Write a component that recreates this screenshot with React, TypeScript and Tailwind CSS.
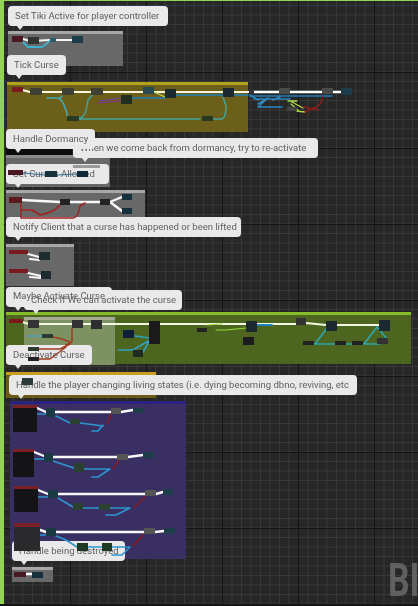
const FONT = "font-['Roboto',sans-serif]";

function Comment({ x, y, w, h, bg, head }: { x: number; y: number; w: number; h: number; bg: string; head: string }) {
  return (
    <div className={`absolute ${bg}`} style={{ left: x, top: y, width: w, height: h }}>
      <div className={`h-[3px] ${head}`} />
    </div>
  );
}

function Bubble({ x, y, w, text, ghost }: { x: number; y: number; w: number; text: string; ghost?: boolean }) {
  return (
    <div
      className={`absolute flex h-5 items-center whitespace-nowrap rounded-[4px] pl-[7px] text-[9.5px] text-[#606060] ${FONT} ${ghost ? "" : "bg-[#e9e9e9]"}`}
      style={{ left: x, top: y, width: w }}
    >
      {text}
      {!ghost && (
        <div className="absolute left-[9px] top-5 h-0 w-0 border-x-[3px] border-t-[4px] border-x-transparent border-t-[#e9e9e9]" />
      )}
    </div>
  );
}

type N = [number, number, number, number, string?];

// graph nodes: x, y, w, h, colour
const nodes: N[] = [
  [12, 36, 11, 6, "#4a1820"], [28, 37, 11, 7, "#30342e"], [50, 38, 6, 4, "#2b5a6a"], [72, 36, 11, 7, "#1d3d4a"],
  [12, 87, 11, 5, "#7a1a1e"], [30, 88, 12, 7, "#3f3f34"], [62, 88, 12, 7, "#3f3f34"], [91, 88, 12, 7, "#3f3f34"],
  [143, 87, 11, 7, "#2a4a52"], [165, 89, 11, 9, "#1a2a2e"], [121, 95, 11, 9, "#22301f"], [67, 116, 12, 5, "#2a3a20"],
  [202, 116, 11, 5, "#2a3a20"], [223, 88, 11, 9, "#1a2a2e"],
  [249, 89, 5, 4, "#333"], [279, 88, 11, 6, "#4a4a4a"], [322, 88, 11, 6, "#4a4a4a"], [341, 88, 11, 7, "#1d3d4a"],
  [287, 107, 10, 4, "#444"],
  [8, 170, 15, 5, "#4a1820"], [45, 171, 12, 6, "#16303c"], [77, 171, 11, 6, "#0e2a3a"],
  [73, 165, 27, 3, "#9a9a9a"],
  [9, 197, 13, 6, "#5a1a1e"], [60, 199, 10, 6, "#222"], [100, 199, 10, 6, "#222"], [122, 194, 10, 6, "#16303c"], [122, 208, 10, 6, "#16303c"],
  [9, 250, 19, 4, "#7a1a1e"], [39, 252, 11, 8, "#1c2c30"], [9, 269, 19, 4, "#7a1a1e"], [41, 271, 10, 8, "#1c2c30"],
  [9, 319, 14, 4, "#7a1a1a"], [28, 320, 11, 8, "#333"], [72, 320, 11, 8, "#333"], [91, 320, 11, 9, "#2e2e2e"],
  [42, 334, 11, 4, "#2a3a30"], [28, 347, 11, 4, "#2a3a30"], [28, 357, 11, 4, "#222"], [149, 321, 11, 23, "#1a1a1a"],
  [123, 330, 11, 8, "#0e2038"], [133, 350, 10, 7, "#1f2a20"], [197, 328, 10, 4, "#222"],
  [246, 321, 11, 11, "#1a2a30"], [243, 337, 11, 8, "#1c1c1c"], [296, 318, 10, 7, "#333"], [326, 321, 11, 10, "#1a2a30"],
  [379, 320, 11, 11, "#1a2a30"], [303, 341, 11, 4, "#222"], [335, 341, 11, 4, "#222"], [352, 341, 11, 4, "#222"], [377, 338, 11, 6, "#333"],
  [22, 378, 11, 7, "#2a3a3a"],
  // purple group
  [13, 405, 24, 3, "#7a2026"], [13, 408, 24, 24, "#141416"], [46, 408, 9, 9, "#1a3a44"], [70, 419, 10, 5, "#2a4030"], [111, 408, 10, 6, "#555"], [133, 408, 11, 5, "#1d3d4a"],
  [13, 449, 21, 3, "#7a2026"], [13, 452, 21, 25, "#141416"], [44, 453, 9, 9, "#1a3a44"], [74, 463, 10, 9, "#2a4030"], [117, 454, 11, 6, "#555"], [143, 452, 11, 6, "#1d3d4a"],
  [14, 486, 24, 3, "#7a2026"], [14, 489, 24, 23, "#141416"], [48, 490, 10, 8, "#1a3a44"], [73, 503, 10, 7, "#2a4030"], [99, 504, 11, 6, "#2a4030"], [145, 490, 11, 6, "#555"], [163, 489, 10, 6, "#1d3d4a"],
  [14, 523, 26, 4, "#7a2026"], [14, 527, 26, 24, "#2a2a2c"], [46, 528, 10, 8, "#1a3a44"], [77, 543, 11, 8, "#1e3a22"], [102, 543, 10, 8, "#1e3a22"], [144, 528, 11, 6, "#555"], [164, 528, 11, 6, "#1d3d4a"],
  [14, 572, 12, 5, "#4a1820"], [32, 572, 11, 6, "#16303c"],
];

// wires: path, colour, width
const wires: [string, string, number][] = [
  ["M23 39 L30 41 L50 40 L72 40", "#f4f4f4", 2],
  ["M23 42 L28 47 H42 L50 41", "#3fb0cc", 1.8],
  ["M22 90 L30 92 H223 L250 92 H342", "#f8f5dc", 2.2],
  ["M47 98 H58 Q64 100 68 118 M60 98 L62 96", "#46a9ae", 1.6],
  ["M79 119 H200 M79 118 Q86 118 88 100 L93 94", "#44a4a0", 1.5],
  ["M213 119 H222 Q226 118 226 106 L223 97", "#44a4a0", 1.5],
  ["M132 98 H165 M176 95 H248 M250 96 H332", "#1e7fb8", 1.6],
  ["M154 92 L165 97", "#b8dc40", 1.2],
  ["M100 101 L121 98", "#7040c0", 1],
  ["M98 103 L121 101", "#8a2ca0", 0.9],
  ["M250 95 L258 100 M254 99 H290 M258 104 L268 98 L258 107 H282 M273 100 L280 97", "#2c88c0", 1.5],
  ["M288 101 H297 M291 104 L300 112 M292 102 L303 108 M297 111 L305 112", "#b0dc44", 1.3],
  ["M322 96 Q323 104 316 107 L305 112 M304 107 L318 110", "#8c1d1d", 1.4],
  ["M254 92 H340", "#ffffff", 2.6],
  ["M23 173 L45 175 M57 175 L77 174", "#2d6f9a", 1],
  ["M22 200 L60 202 H110 L122 197 M110 202 L122 211 M70 202 H100", "#f8f8f8", 2.4],
  ["M21 204 L21 218 H73 Q78 218 80 206 L85 203 M21 210 H32 L40 215 Q55 212 60 205", "#a32020", 1.5],
  ["M28 254 L39 257 M30 259 L39 260", "#f4f4f4", 2.2],
  ["M28 273 L41 276 M30 277 L41 278", "#f4f4f4", 2.2],
  ["M22 322 L29 324 H149 H246 L264 324 H296 L306 323 L326 325 H379", "#f4f6e4", 2],
  ["M257 325 H272", "#1f80c0", 1.8],
  ["M27 336 H42 M53 337 L62 339 L70 342 M72 329 V342 L66 345 M39 349 H60 L70 344 M39 359 H50 L66 347", "#a03a20", 1.5],
  ["M27 336 H42", "#4ab4d8", 1.4],
  ["M135 336 L150 338 M118 350 H133 L150 340 M143 352 L150 340", "#34a0c0", 1.6],
  ["M216 330 H226 L246 328 M207 325 L222 324", "#9ad83a", 1.2],
  ["M246 335 V338", "#b04030", 1.2],
  ["M315 344 L327 328 M313 344 H379 M364 344 L377 327 L387 339", "#2da6b0", 1.6],
  ["M37 408 L46 412 M55 412 H111 M121 412 L133 410", "#f8f8f8", 2.4],
  ["M37 414 H46 M56 416 L70 423 M80 423 L103 426 M92 431 H98 L103 425", "#2d96d0", 1.6],
  ["M107 424 L111 414", "#8a1c24", 1.5],
  ["M34 452 L44 456 M53 457 H117 M128 457 L143 455", "#f8f8f8", 2.4],
  ["M34 459 H44 M53 461 L74 468 M84 469 H110 L98 477 H92", "#2d96d0", 1.6],
  ["M113 469 L119 460", "#8a1c24", 1.5],
  ["M38 490 L48 494 M58 494 H145 M156 494 L163 492", "#f8f8f8", 2.4],
  ["M38 497 H48 M58 498 L73 507 M83 508 H99 M110 508 H130 L116 515 H106", "#2d96d0", 1.6],
  ["M134 508 L145 497", "#8a1c24", 1.5],
  ["M40 530 L46 532 M56 532 H144 M155 532 L164 531", "#f8f8f8", 2.4],
  ["M40 535 H46 M56 536 L66 540 L77 547 M88 547 H102 M112 547 H130 L122 555 H112", "#2d96d0", 1.6],
  ["M133 546 L144 534", "#8a1c24", 1.5],
  ["M26 574 H32", "#ffffff", 2.4],
];

export default function App() {
  return (
    <div className="relative h-[606px] w-[418px] overflow-hidden bg-[#272727] bg-[linear-gradient(#141414_1px,transparent_1px),linear-gradient(90deg,#141414_1px,transparent_1px),linear-gradient(#383838_1px,transparent_1px),linear-gradient(90deg,#383838_1px,transparent_1px)] bg-size-[76px_76px,76px_76px,9.5px_9.5px,9.5px_9.5px] bg-position-[0_72px,70px_0,0_5px,3.5px_0] blur-[0.5px]">
      <div className="absolute inset-y-0 left-0 w-[4px] bg-[#8fd455]" />
      <div className="absolute inset-x-0 top-0 h-[1px] bg-[#8fd455]" />
      <div className="absolute inset-x-0 bottom-0 h-[2px] bg-[#141414]" />

      <Comment x={8} y={31} w={115} h={35} bg="bg-[#686868]" head="bg-[#a8a8a8]" />
      <Comment x={7} y={82} w={241} h={50} bg="bg-[#6b5f1a]" head="bg-[#b3a21c]" />
      <Comment x={6} y={148} w={66} h={7} bg="bg-[#0c0c0c]" head="bg-[#0c0c0c]" />
      <Comment x={6} y={155} w={104} h={32} bg="bg-[#686868]" head="bg-[#8a8a8a]" />
      <Comment x={6} y={190} w={139} h={28} bg="bg-[#686868]" head="bg-[#a8a8a8]" />
      <Comment x={6} y={244} w={68} h={42} bg="bg-[#686868]" head="bg-[#a8a8a8]" />
      <Comment x={6} y={312} w={405} h={52} bg="bg-[#4c661f]" head="bg-[#86bb2c]" />
      <Comment x={24} y={317} w={91} h={48} bg="bg-[#7d9263]" head="bg-[#a5ad97]" />
      <Comment x={6} y={372} w={150} h={26} bg="bg-[#6b5a18]" head="bg-[#c9a01e]" />
      <Comment x={10} y={401} w={176} h={158} bg="bg-[#3a2f63]" head="bg-[#2b2180]" />
      <Comment x={12} y={567} w={41} h={15} bg="bg-[#686868]" head="bg-[#a8a8a8]" />

      <Bubble x={8} y={6} w={160} text="Set Tiki Active for player controller" />
      <Bubble x={7} y={55} w={59} text="Tick Curse" />
      <Bubble x={73} y={138} w={245} text="When we come back from dormancy, try to re-activate" />
      <Bubble x={6} y={129} w={89} text="Handle Dormancy" />
      <Bubble x={6} y={164} w={103} text="Set Curses Allowed" />
      <Bubble x={6} y={217} w={235} text="Notify Client that a curse has happened or been lifted" />
      <Bubble x={6} y={287} w={106} text="" />
      <Bubble x={24} y={290} w={158} text="Check If We can activate the curse" />
      <Bubble x={6} y={286} w={106} text="Maybe Activate Curse" ghost />
      <Bubble x={6} y={345} w={86} text="Deactivate Curse" />
      <Bubble x={9} y={375} w={348} text="Handle the player changing living states (i.e. dying becoming dbno, reviving, etc" />
      <Bubble x={12} y={541} w={113} text="Handle being destroyed" />

      <svg className="absolute left-0 top-0" width={418} height={606} fill="none" strokeLinecap="round" strokeLinejoin="round">
        {wires.map(([d, c, w], i) => (
          <path key={i} d={d} stroke={c} strokeWidth={w} />
        ))}
        {nodes.map(([x, y, w, h, c], i) => (
          <rect key={i} x={x} y={y} width={w} height={h} fill={c} />
        ))}
      </svg>

      <div className="absolute left-[388px] top-[552px] origin-left scale-x-[0.72] text-[47px] font-bold leading-[56px] text-[#606060] font-['Roboto',sans-serif]">
        BI
      </div>
    </div>
  );
}
